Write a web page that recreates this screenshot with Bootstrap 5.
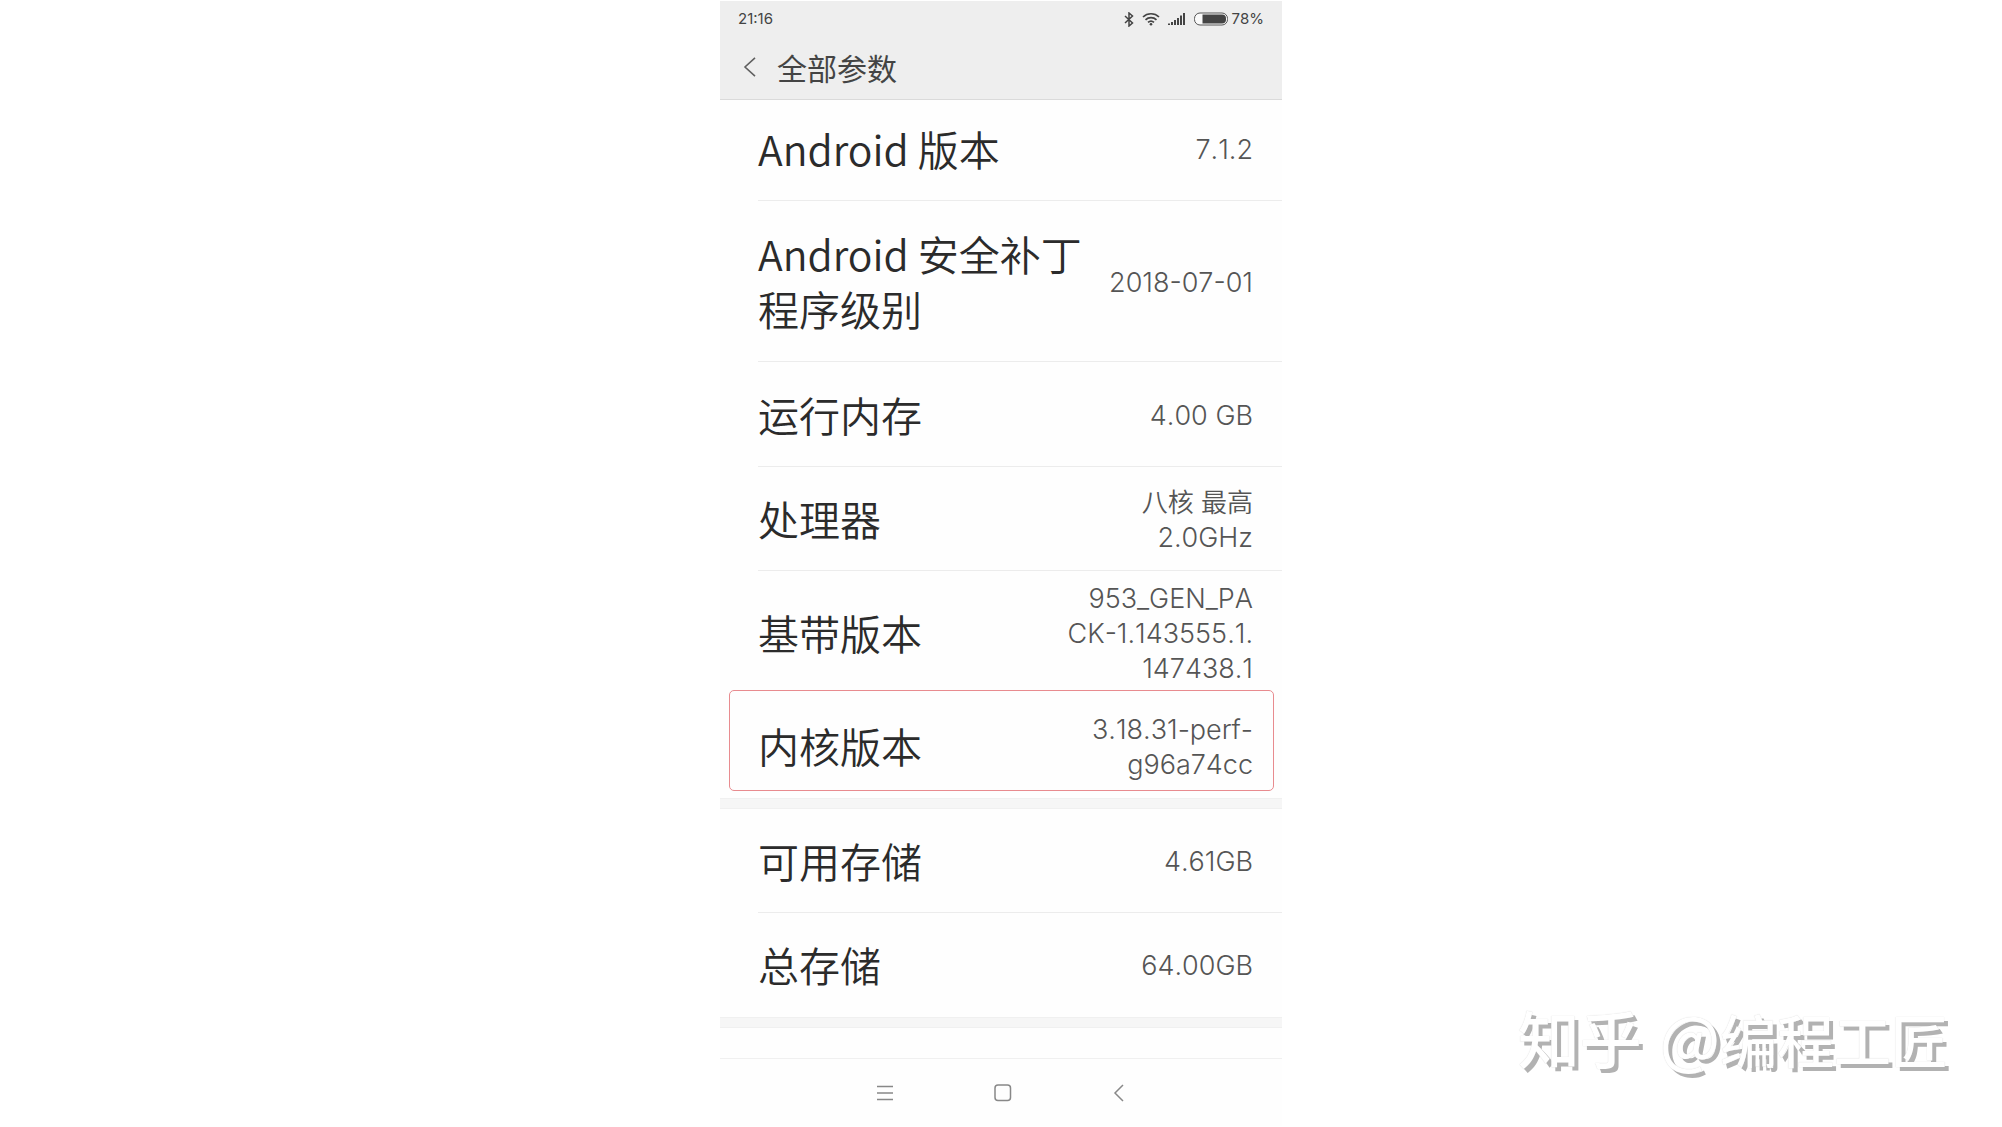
<!DOCTYPE html>
<html lang="zh-CN">
<head>
<meta charset="utf-8">
<meta name="viewport" content="width=device-width, initial-scale=1">
<title>全部参数</title>
<link href="https://cdn.jsdelivr.net/npm/bootstrap@5.3.0/dist/css/bootstrap.min.css" rel="stylesheet">
<style>
body { background: #fff; font-family: "Noto Sans CJK SC", sans-serif; color: #2b2b2b; }
.phone { max-width: 562px; background: #fefefe; margin-top: 1px; }
.topbar { background: #eee; border-bottom: 1px solid #dadada; height: 99px; color: #444; }
.status { font: 400 15px/20px Inter, sans-serif; font-kerning: none; height: 36px; padding: 0 18px; }
.status svg { display: block; }
.titlebar { padding: 0 23px 3px; gap: 20px; height: 62px; }
.titlebar h1 { font-size: 30px; line-height: 40px; font-weight: 400; }
.back-btn, .nav-key { background: none; border: 0; padding: 0; display: block; }
.spec { margin-left: 38px; padding-right: 29px; min-height: 104px; border-bottom: 1px solid #ececec; gap: 16px; }
.spec.first { min-height: 101px; padding-bottom: 3px; }
.spec.patch { min-height: 161px; }
.spec.memory { min-height: 105px; }
.spec.baseband { min-height: 123px; }
.spec.last { border-bottom-color: transparent; }
.spec dt { font-size: 41px; line-height: 55px; font-weight: 350; }
.spec dd { font: 300 27px/35px Inter, "Noto Sans CJK SC", sans-serif; font-kerning: none; color: #555; text-align: right; padding-top: 2px; }
.spec dd .han { font-size: 26px; font-weight: 350; }
.divider { height: 11px; background: #f6f6f6; border-top: 1px solid #f0f0f0; border-bottom: 1px solid #f0f0f0; }
.marked { position: relative; }
.marked::after { content: ""; position: absolute; left: -29px; right: 8px; top: -4px; bottom: 6px; border: 1px solid #e88b8f; border-radius: 5px; }
.peek { height: 30px; }
.navkeys { border-top: 1px solid #f0f0f0; height: 68px; gap: 101px; }
.watermark { position: absolute; right: 54px; bottom: 46px; color: #fff; font-size: 57px; line-height: 84px; font-weight: 500; text-shadow: 4px 4px #b2b2b2, 0 0 1px #ccc; gap: 18px; }
.watermark .site, .watermark .at { font-size: 62px; }
</style>
<script src="https://cdn.jsdelivr.net/npm/bootstrap@5.3.0/dist/js/bootstrap.bundle.min.js"></script>
</head>
<body class="position-relative">
<main class="phone w-100 mx-auto overflow-hidden">
  <header class="topbar">
    <div class="status d-flex align-items-center">
      <span class="me-auto">21:16</span>
      <svg class="me-2" width="10" height="15" viewBox="0 0 10 15" fill="none" stroke="#444" stroke-width="1.500"><path d="M1 4l7.500 7L5 14V1l3.500 3L1 11"/></svg>
      <svg width="18" height="14" viewBox="0 0 18 14" fill="none" stroke="#444" stroke-width="1.700"><path d="M1 5a11.500 11.500 0 0 1 16 0M3.500 7.800a8 8 0 0 1 11 0M6 10.400a4.500 4.500 0 0 1 6 0"/><circle cx="9" cy="12.300" r="1.300" fill="#444" stroke="none"/></svg>
      <svg class="ms-2 me-2" width="18" height="12" viewBox="0 0 18 12" fill="#444"><path d="M0 10.500h2V12H0zM3 9h2v3H3zM6 7h2v5H6zM9 5h2v7H9zM12 2.500h2V12h-2zM15 0h2v12h-2z"/></svg>
      <svg class="me-1" width="34" height="14" viewBox="0 0 34 14"><rect x=".5" y="1" width="33" height="12" rx="5.500" fill="#fafafa" stroke="#555"/><path d="M8.500 2.500H28a4 4 0 0 1 4 4v1a4 4 0 0 1-4 4H8.500z" fill="#444"/></svg>
      <span>78%</span>
    </div>
    <div class="titlebar d-flex align-items-center">
      <button class="back-btn" type="button" aria-label="返回"><svg class="d-block" width="14" height="20" viewBox="0 0 14 20" fill="none" stroke="#606060" stroke-width="1.600"><path d="M12 .8L2 10l10 9.200"/></svg></button>
      <h1 class="m-0">全部参数</h1>
    </div>
  </header>
  <dl class="m-0">
    <div class="spec first d-flex align-items-center justify-content-between"><dt>Android 版本</dt><dd class="m-0">7.1.2</dd></div>
    <div class="spec patch d-flex align-items-center justify-content-between"><dt class="text-nowrap">Android 安全补丁<br>程序级别</dt><dd class="m-0 text-nowrap">2018-07-01</dd></div>
    <div class="spec memory d-flex align-items-center justify-content-between"><dt>运行内存</dt><dd class="m-0">4.00 GB</dd></div>
    <div class="spec d-flex align-items-center justify-content-between"><dt>处理器</dt><dd class="m-0"><span class="han">八核 最高</span><br>2.0GHz</dd></div>
    <div class="spec baseband last d-flex align-items-center justify-content-between"><dt>基带版本</dt><dd class="m-0">953_GEN_PA<br>CK-1.143555.1.<br>147438.1</dd></div>
    <div class="spec last marked d-flex align-items-center justify-content-between"><dt>内核版本</dt><dd class="m-0">3.18.31-perf-<br>g96a74cc</dd></div>
  </dl>
  <div class="divider"></div>
  <dl class="m-0">
    <div class="spec d-flex align-items-center justify-content-between"><dt>可用存储</dt><dd class="m-0">4.61GB</dd></div>
    <div class="spec last d-flex align-items-center justify-content-between"><dt>总存储</dt><dd class="m-0">64.00GB</dd></div>
  </dl>
  <div class="divider"></div>
  <div class="peek"></div>
  <nav class="navkeys d-flex align-items-center justify-content-center">
    <button class="nav-key" type="button" aria-label="菜单"><svg class="d-block" width="16" height="18" viewBox="0 0 16 18" stroke="#888" stroke-width="1.500"><path d="M0 2.500h16M0 9h16M0 15.500h16"/></svg></button>
    <button class="nav-key" type="button" aria-label="主页"><svg class="d-block" width="18" height="18" viewBox="0 0 18 18" fill="none" stroke="#888" stroke-width="1.500"><rect x="1" y="1" width="15.500" height="15.500" rx="3"/></svg></button>
    <button class="nav-key" type="button" aria-label="后退"><svg class="d-block" width="12" height="18" viewBox="0 0 12 18" fill="none" stroke="#888" stroke-width="1.500"><path d="M10 1L2 9l8 8"/></svg></button>
  </nav>
</main>
<div class="watermark d-flex align-items-center"><span class="site">知乎</span><span><span class="at">@</span>编程工匠</span></div>
</body>
</html>
